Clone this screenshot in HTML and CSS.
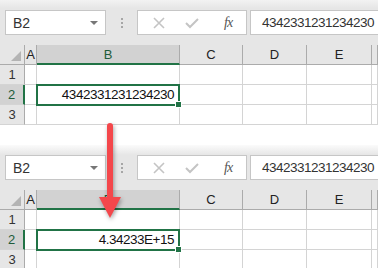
FILE: index.html
```html
<!DOCTYPE html>
<html lang="en">
<head>
  <meta charset="UTF-8" />
  <title>Number as scientific</title>
  <link rel="stylesheet" href="styles.css">
</head>
<body>

  <!-- Before -->
  <div class="panel">
    <div class="toolbar">
      <div class="namebox">
        <span>B2</span>
        <span class="caret"></span>
      </div>
      <div class="dots"><i></i><i></i><i></i></div>
      <div class="fbuttons">
        <svg class="ic" width="14" height="14" viewBox="0 0 14 14"><path d="M2 2 L12 12 M12 2 L2 12" stroke="#c4c4c4" stroke-width="1.6" fill="none"/></svg>
        <svg class="ic" width="16" height="14" viewBox="0 0 16 14"><path d="M2 7 L6 11 L14 3" stroke="#c4c4c4" stroke-width="2" fill="none"/></svg>
        <span class="fx">fx</span>
      </div>
      <div class="formula">4342331231234230</div>
    </div>
    <div class="grid">
      <div class="hd corner"></div>
      <div class="hd col">A</div>
      <div class="hd col sel">B</div>
      <div class="hd col">C</div>
      <div class="hd col">D</div>
      <div class="hd col">E</div>
      <div class="hd col"></div>

      <div class="hd row">1</div>
      <div class="c"></div><div class="c"></div><div class="c"></div><div class="c"></div><div class="c"></div><div class="c"></div>

      <div class="hd row sel">2</div>
      <div class="c"></div><div class="c active">4342331231234230</div><div class="c"></div><div class="c"></div><div class="c"></div><div class="c"></div>

      <div class="hd row">3</div>
      <div class="c"></div><div class="c"></div><div class="c"></div><div class="c"></div><div class="c"></div><div class="c"></div>
    </div>
  </div>

  <!-- After -->
  <div class="panel after">
    <div class="toolbar">
      <div class="namebox">
        <span>B2</span>
        <span class="caret"></span>
      </div>
      <div class="dots"><i></i><i></i><i></i></div>
      <div class="fbuttons">
        <svg class="ic" width="14" height="14" viewBox="0 0 14 14"><path d="M2 2 L12 12 M12 2 L2 12" stroke="#c4c4c4" stroke-width="1.6" fill="none"/></svg>
        <svg class="ic" width="16" height="14" viewBox="0 0 16 14"><path d="M2 7 L6 11 L14 3" stroke="#c4c4c4" stroke-width="2" fill="none"/></svg>
        <span class="fx">fx</span>
      </div>
      <div class="formula">4342331231234230</div>
    </div>
    <div class="grid">
      <div class="hd corner"></div>
      <div class="hd col">A</div>
      <div class="hd col sel">B</div>
      <div class="hd col">C</div>
      <div class="hd col">D</div>
      <div class="hd col">E</div>
      <div class="hd col"></div>

      <div class="hd row">1</div>
      <div class="c"></div><div class="c"></div><div class="c"></div><div class="c"></div><div class="c"></div><div class="c"></div>

      <div class="hd row sel">2</div>
      <div class="c"></div><div class="c active">4.34233E+15</div><div class="c"></div><div class="c"></div><div class="c"></div><div class="c"></div>

      <div class="hd row">3</div>
      <div class="c"></div><div class="c"></div><div class="c"></div><div class="c"></div><div class="c"></div><div class="c"></div>
    </div>
  </div>

  <!-- Red arrow over both panels -->
  <svg class="arrow" width="30" height="104" viewBox="0 0 30 104">
    <line x1="14" y1="5" x2="14" y2="80" stroke="#f4474b" stroke-width="6" stroke-linecap="round"/>
    <polygon points="3,76 25,76 14,97" fill="#f4474b"/>
  </svg>

</body>
</html>
```

FILE: styles.css
```css
* {
  box-sizing: border-box;
}

body {
  margin: 0;
  width: 378px;
  height: 268px;
  overflow: hidden;
  position: relative;
  background: #fff;
  font-family: 'Liberation Sans', Arial, sans-serif;
  color: #222;
}

.panel.after {
  margin-top: 20px;
}

/* Formula bar */
.toolbar {
  height: 45px;
  display: flex;
  align-items: center;
  padding-left: 5px;
  background: linear-gradient(#f2f2f2, #e6e6e6 8px);
  white-space: nowrap;
}

.panel.after .toolbar {
  background: linear-gradient(#fbfbfb, #e6e6e6 10px);
}

.namebox {
  width: 101px;
  height: 25px;
  background: #fff;
  border: 1px solid #c6c6c6;
  display: flex;
  align-items: center;
  justify-content: space-between;
  padding: 0 7px 0 7px;
  font-size: 14px;
  color: #333;
}

.caret {
  width: 0;
  height: 0;
  border-left: 4px solid transparent;
  border-right: 4px solid transparent;
  border-top: 4px solid #777;
}

.dots {
  width: 31px;
  display: flex;
  flex-direction: column;
  align-items: center;
  gap: 2px;
}

.dots i {
  width: 2px;
  height: 2px;
  background: #a6a6a6;
}

.fbuttons {
  width: 110px;
  height: 25px;
  background: #fff;
  border: 1px solid #c6c6c6;
  display: flex;
  align-items: center;
  padding-left: 14px;
}

.fbuttons .ic + .ic {
  margin-left: 18px;
}

.fx {
  margin-left: 24px;
  font-family: 'Liberation Serif', serif;
  font-style: italic;
  font-size: 14px;
  color: #555;
  letter-spacing: -1px;
}

.formula {
  flex: 1;
  height: 25px;
  margin-left: 3px;
  background: #fff;
  border: 1px solid #c6c6c6;
  border-right: none;
  padding-left: 11px;
  display: flex;
  align-items: center;
  font-size: 13.5px;
  letter-spacing: -0.5px;
  color: #333;
}

/* Grid */
.grid {
  display: grid;
  grid-template-columns: 25px 12px 143px 63px 64px 65px 1fr;
  grid-auto-rows: 20px;
}

.hd {
  background: #e6e6e6;
  font-size: 13px;
  display: flex;
  align-items: center;
  justify-content: center;
  color: #222;
}

.hd.col {
  border-right: 1px solid #ababab;
  border-bottom: 1px solid #ababab;
}

.hd.col.sel {
  background: #d2d2d2;
  color: #1f5c3a;
  border-bottom: 2px solid #217346;
}

.hd.row {
  border-right: 1px solid #ababab;
  border-bottom: 1px solid #d4d4d4;
  color: #333;
}

.hd.row.sel {
  background: #d2d2d2;
  color: #1f5c3a;
  border-right: 2px solid #217346;
}

.corner {
  position: relative;
  border-right: 1px solid #ababab;
  border-bottom: 1px solid #ababab;
}

.corner::after {
  content: "";
  position: absolute;
  right: 3px;
  bottom: 3px;
  width: 0;
  height: 0;
  border-left: 10px solid transparent;
  border-bottom: 10px solid #b4b4b4;
}

.c {
  border-right: 1px solid #d4d4d4;
  border-bottom: 1px solid #d4d4d4;
  font-size: 13.5px;
  letter-spacing: -0.5px;
  display: flex;
  align-items: center;
  justify-content: flex-end;
  padding-right: 5px;
  color: #111;
}

.c.active {
  position: relative;
}

.c.active::after {
  content: "";
  position: absolute;
  left: -1px;
  top: -1px;
  right: -1px;
  bottom: -2px;
  border: 2px solid #217346;
}

.c.active::before {
  content: "";
  position: absolute;
  right: -3px;
  bottom: -4px;
  width: 5px;
  height: 5px;
  background: #217346;
  border: 1px solid #fff;
  z-index: 1;
}

.arrow {
  position: absolute;
  left: 96px;
  top: 121px;
  filter: drop-shadow(1px 2px 2px rgba(0, 0, 0, 0.35));
}
```
